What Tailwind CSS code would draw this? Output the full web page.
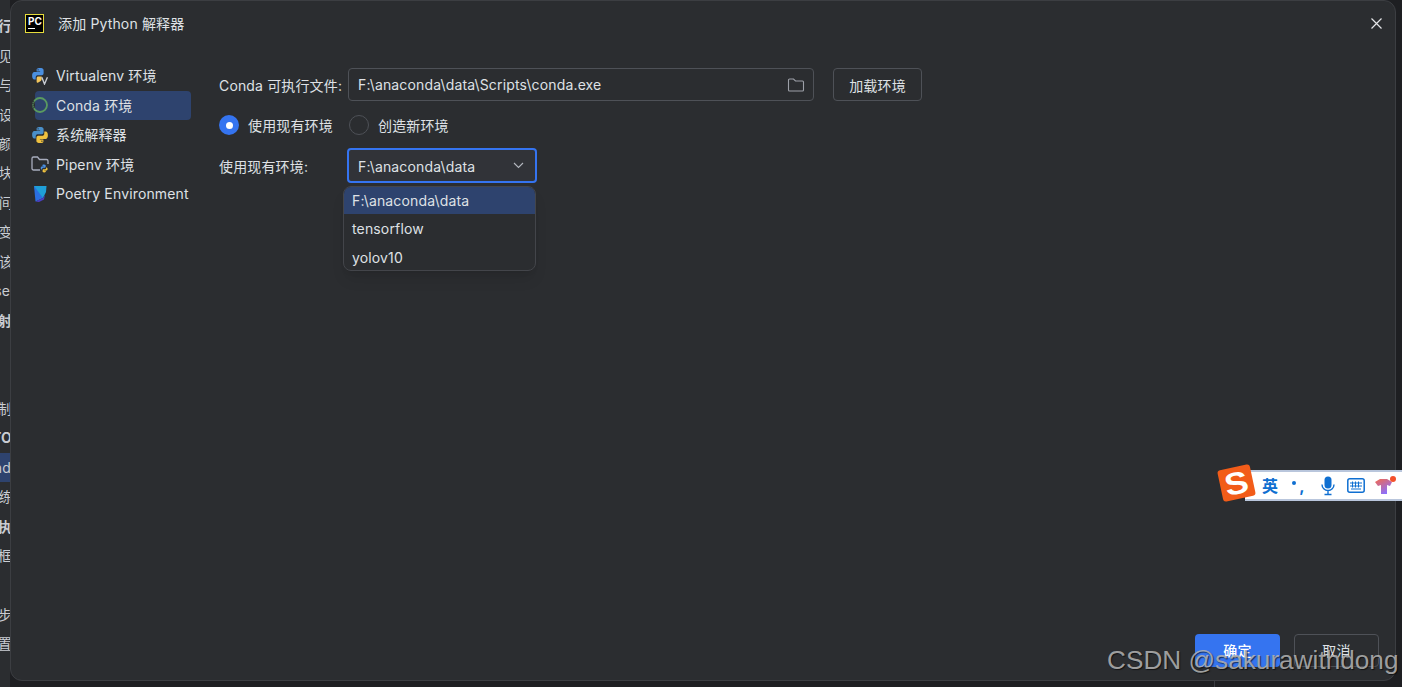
<!DOCTYPE html>
<html lang="en">
  <head>
    <meta charset="UTF-8" />
    <title>添加 Python 解释器</title>
    <script src="https://cdn.jsdelivr.net/npm/@tailwindcss/browser@4"></script>
  </head>
  <body class="relative w-[1402px] h-[687px] overflow-hidden bg-[#1e1f22] text-[#dfe1e5] text-[14px] tracking-[0.15px] font-['Inter','Noto_Sans_CJK_SC',sans-serif]">
    <div class="flex h-[687px] items-start">
      <!-- ide window behind the dialog, only a sliver shows -->
      <div class="w-[10px] h-[687px] shrink-0 overflow-hidden pt-[11px] bg-[#2b2d30] text-[#c9ccd2]">
        <div class="h-[29.45px] flex items-center justify-end whitespace-nowrap font-bold"><span class="-mr-[2px]">行</span></div>
        <div class="h-[29.45px] flex items-center justify-end whitespace-nowrap"><span class="-mr-[3px]">见</span></div>
        <div class="h-[29.45px] flex items-center justify-end whitespace-nowrap"><span class="-mr-[3px]">与</span></div>
        <div class="h-[29.45px] flex items-center justify-end whitespace-nowrap"><span class="-mr-[3px]">设</span></div>
        <div class="h-[29.45px] flex items-center justify-end whitespace-nowrap"><span class="-mr-[3px]">颜</span></div>
        <div class="h-[29.45px] flex items-center justify-end whitespace-nowrap"><span class="-mr-[3px]">块</span></div>
        <div class="h-[29.45px] flex items-center justify-end whitespace-nowrap"><span class="-mr-[3px]">间</span></div>
        <div class="h-[29.45px] flex items-center justify-end whitespace-nowrap"><span class="-mr-[3px]">变</span></div>
        <div class="h-[29.45px] flex items-center justify-end whitespace-nowrap"><span class="-mr-[3px]">该</span></div>
        <div class="h-[29.45px] flex items-center justify-end whitespace-nowrap"><span>se</span></div>
        <div class="h-[29.45px] flex items-center justify-end whitespace-nowrap font-bold"><span class="-mr-[2px]">射</span></div>
        <div class="h-[29.45px]"></div>
        <div class="h-[29.45px]"></div>
        <div class="h-[29.45px] flex items-center justify-end whitespace-nowrap"><span class="-mr-[2px]">制</span></div>
        <div class="h-[29.45px] flex items-center justify-end whitespace-nowrap font-bold"><span class="-mr-[2px]">TO</span></div>
        <div class="h-[29.45px] flex items-center justify-end whitespace-nowrap bg-[#2e436e]"><span class="-mr-[1px]">nd</span></div>
        <div class="h-[29.45px] flex items-center justify-end whitespace-nowrap"><span class="-mr-[3px]">练</span></div>
        <div class="h-[29.45px] flex items-center justify-end whitespace-nowrap font-bold"><span class="-mr-[2px]">执</span></div>
        <div class="h-[29.45px] flex items-center justify-end whitespace-nowrap"><span class="-mr-[2px]">框</span></div>
        <div class="h-[29.45px]"></div>
        <div class="h-[29.45px] flex items-center justify-end whitespace-nowrap"><span class="-mr-[2px]">步</span></div>
        <div class="h-[29.45px] flex items-center justify-end whitespace-nowrap"><span class="-mr-[2px]">置</span></div>
      </div>

      <!-- dialog -->
      <div class="w-[1386px] h-[681px] shrink-0 flex flex-col bg-[#2b2d30] border border-[#3c3e42] rounded-[12px]">
        <div class="h-[45px] shrink-0 flex items-center pl-[14px] pr-[12px]">
          <div class="w-[19px] h-[19px] bg-black border border-[#e6dc3c] flex flex-col pl-[2px] pt-[1px] text-white">
            <span class="text-[10px] leading-[10px] font-bold tracking-normal">PC</span>
            <span class="w-[7px] h-[1px] bg-white mt-[2px]"></span>
          </div>
          <span class="ml-[14px] -mt-[1px]">添加 Python 解释器</span>
          <svg class="ml-auto" width="13" height="13" viewBox="0 0 13 13" fill="none" stroke="#e4e5e7" stroke-width="1.2"><path d="M1.5 1.5l10 10M11.5 1.5l-10 10" /></svg>
        </div>

        <div class="flex-1 flex min-h-0">
          <!-- left list -->
          <div class="w-[196px] shrink-0 pt-[15px] pl-[20px]">
            <div class="h-[29.5px] flex items-center">
              <svg class="shrink-0" width="18" height="18" viewBox="0 0 16 16">
                <path fill="#4a8fe0" d="M8 .8C5 .8 5 2.1 5 2.1V4h3.1v.5H3.2S1 4.3 1 7.8c0 3.4 2 3.3 2 3.3h1.2V9.4s-.1-2 2-2h3.1s1.9 0 1.9-1.8V2.8S11.5.8 8 .8zM6.3 1.9a.6.6 0 110 1.2.6.6 0 010-1.2z" />
                <path fill="#f2c55c" d="M6.5 8.5h3v2.2c0 1.1-.7 1.6-1.5 2.2L6 14c-.6 0-1-.6-1-1.2V10c0-.9.6-1.500 1.500-1.500z" />
                <path fill="none" stroke="#c9ccd2" stroke-width="1.2" d="M9.600 9.200l2.400 6 2.600-6" />
              </svg>
              <span class="ml-[7px]">Virtualenv 环境</span>
            </div>
            <div class="h-[29.5px] flex items-center relative">
              <div class="absolute left-[4px] top-0 w-[156px] h-[29px] rounded-[4px] bg-[#2e436e]"></div>
              <svg class="relative shrink-0" width="18" height="18" viewBox="0 0 18 18" fill="none">
                <circle cx="9" cy="9" r="7" stroke="#5a9a60" stroke-width="1.800" />
                <path d="M3 5.500A7 7 0 003 12.500" stroke="#2b2d30" stroke-width="1.900" stroke-dasharray="1 1" />
              </svg>
              <span class="relative ml-[7px]">Conda 环境</span>
            </div>
            <div class="h-[29.5px] flex items-center">
              <svg class="shrink-0" width="18" height="18" viewBox="0 0 16 16">
                <path fill="#4a8fc9" d="M8 .8C5 .8 5 2.100 5 2.100V4h3.100v.5H3.200S1 4.300 1 7.800c0 3.400 2 3.300 2 3.300h1.200V9.400s-.1-2 2-2h3.100s1.900 0 1.900-1.800V2.800S11.500.8 8 .8zM6.300 1.900a.6.6 0 110 1.200.6.6 0 010-1.200z" />
                <path fill="#efc13f" d="M8 15.200c3 0 3-1.300 3-1.300V12H7.900v-.5h4.900s2.200.2 2.200-3.300c0-3.400-2-3.300-2-3.300h-1.200v1.700s.1 2-2 2H6.700s-1.900 0-1.900 1.800v2.800s-.3 2 3.200 2zM9.700 14.100a.6.6 0 110-1.200.6.6 0 010 1.200z" />
              </svg>
              <span class="ml-[7px]">系统解释器</span>
            </div>
            <div class="h-[29.5px] flex items-center">
              <svg class="shrink-0" width="18" height="18" viewBox="0 0 18 18" fill="none">
                <path d="M9 15H2.500A1.500 1.500 0 011 13.500V3.500A1.500 1.500 0 012.500 2h4l2 2.500h7A1.500 1.500 0 0117 6v3" stroke="#a8adbd" stroke-width="1.300" />
                <path fill="#4a8fe0" d="M13 9.500c-1.500 0-1.500.7-1.500.7v1h1.600v.3h-2.400s-1 0-1 1.500 .9 1.500 .9 1.500h.6v-.8s0-1 1-1h1.500s1 0 1-.9v-1.400s0-.9-1.700-.9z" />
                <path fill="#efc13f" d="M13.300 17.500c1.500 0 1.500-.7 1.500-.7v-1h-1.600v-.3h2.400s1 0 1-1.500-.9-1.500-.9-1.500h-.6v.8s0 1-1 1h-1.500s-1 0-1 .9v1.400s0 .9 1.700.9z" />
              </svg>
              <span class="ml-[7px]">Pipenv 环境</span>
            </div>
            <div class="h-[29.5px] flex items-center">
              <svg class="shrink-0" width="18" height="18" viewBox="0 0 18 18">
                <path fill="#1f9fd8" d="M3 1h12.500L15 7l-3 6H6z" />
                <path fill="#2a6fe0" d="M3 1l9 12-7.500 3.500z" />
                <path fill="#4b3fc4" d="M4.500 16.500L12 13l2-3-1 4.500-5 2.500z" />
              </svg>
              <span class="ml-[7px]">Poetry Environment</span>
            </div>
          </div>

          <!-- form -->
          <div class="flex-1 pt-[22px] pl-[12px]">
            <div class="flex items-center h-[33px]">
              <span class="w-[129px] shrink-0 pt-[1px]">Conda 可执行文件:</span>
              <div class="w-[466px] h-[33px] flex items-center justify-between pl-[9px] pr-[8px] border border-[#4e5157] rounded-[4px]">
                <span class="-mt-[1px]">F:\anaconda\data\Scripts\conda.exe</span>
                <svg width="18" height="16" viewBox="0 0 18 16" fill="none" stroke="#9da0a8" stroke-width="1.100"><path d="M1.500 13V3a1 1 0 011-1h4l2 2h7a1 1 0 011 1v8a1 1 0 01-1 1h-13a1 1 0 01-1-1z" /></svg>
              </div>
              <div class="ml-[19px] w-[89px] h-[33px] flex items-center justify-center border border-[#4e5157] rounded-[4px] pt-[1px]">加载环境</div>
            </div>

            <div class="flex items-center h-[20px] mt-[14px]">
              <span class="w-[20px] h-[20px] rounded-full bg-[#3574f0] flex items-center justify-center"><span class="w-[7px] h-[7px] rounded-full bg-white"></span></span>
              <span class="ml-[9px] w-[101px]">使用现有环境</span>
              <span class="w-[20px] h-[20px] rounded-full border border-[#4e5157]"></span>
              <span class="ml-[9px]">创造新环境</span>
            </div>

            <div class="flex items-center h-[35px] mt-[13px] relative">
              <span class="w-[128px] shrink-0 pt-[1px]">使用现有环境:</span>
              <div class="w-[190px] h-[35px] flex items-center justify-between pl-[9px] pr-[11px] border-2 border-[#3574f0] rounded-[4px] bg-[#313338]">
                <span class="pt-[1px]">F:\anaconda\data</span>
                <svg width="11" height="7" viewBox="0 0 11 7" fill="none" stroke="#b4b8bf" stroke-width="1.100"><path d="M1 1l4.500 4.500L10 1" /></svg>
              </div>
              <!-- popup -->
              <div class="absolute left-[124px] top-[38px] w-[193px] h-[85px] rounded-[8px] border border-[#43454a] bg-[#2b2d30] overflow-hidden shadow-lg">
                <div class="h-[27px] flex items-center pl-[8px] bg-[#2e436e]">F:\anaconda\data</div>
                <div class="h-[29px] flex items-center pl-[8px]">tensorflow</div>
                <div class="h-[28px] flex items-center pl-[8px] pt-[1px]">yolov10</div>
              </div>
            </div>
          </div>
        </div>

        <div class="h-[46px] shrink-0 flex items-start justify-end pr-[16px]">
          <div class="w-[85px] h-[33px] flex items-center justify-center rounded-[4px] bg-[#3574f0] text-white font-medium">确定</div>
          <div class="ml-[14px] w-[85px] h-[33px] flex items-center justify-center rounded-[4px] border border-[#4e5157]">取消</div>
        </div>
      </div>
    </div>

    <!-- bottom edge of the ide, under the dialog -->
    <div class="absolute left-[1214px] top-[681px] w-[1px] h-[6px] bg-[#393b40]"></div>

    <!-- sogou ime bar -->
    <div class="absolute left-[1245px] top-[470px] w-[157px] h-[31px] flex items-center bg-white border-y-2 border-[#b9c6dc] text-[#0f6fd1]">
      <span class="ml-[17px] text-[16px] font-bold">英</span>
      <span class="ml-[14px] w-[4px] h-[4px] rounded-full bg-[#0f6fd1] mb-[6px]"></span>
      <span class="ml-[3px] text-[16px] font-bold leading-none">,</span>
      <svg class="ml-[16px]" width="14" height="20" viewBox="0 0 14 20" fill="none"><rect x="3.500" y="0.500" width="7" height="12" rx="3.500" fill="#0f6fd1" /><path d="M1 8.500a6 6 0 0012 0M7 14.500V18M3.500 18.500h7" stroke="#0f6fd1" stroke-width="1.400" /></svg>
      <svg class="ml-[12px]" width="18" height="15" viewBox="0 0 18 15" fill="none" stroke="#0f6fd1"><rect x="0.800" y="0.800" width="16.400" height="13.400" rx="2" stroke-width="1.500" /><path d="M3 5h12M3 8h12M4 11h10M5.500 3.500v6M8.500 3.500v6M11.500 3.500v6" stroke-width="1" /></svg>
      <svg class="ml-[9px]" width="22" height="20" viewBox="0 0 22 20"><defs><linearGradient id="shirt" x1="0" y1="0" x2="0.600" y2="1"><stop offset="0" stop-color="#f5694a" /><stop offset="1" stop-color="#8a70ff" /></linearGradient></defs><path fill="url(#shirt)" d="M1 6l5-3h7l5 3-2 4-3-1v9H7V9l-3 1z" /><circle cx="19" cy="3" r="3" fill="#f4512c" /></svg>
    </div>
    <div class="absolute left-[1220px] top-[467px] w-[33px] h-[32px] rounded-[3px] -rotate-[12deg] bg-[#f25c19] flex items-center justify-center text-white text-[31px] leading-none font-bold font-['Liberation_Sans',sans-serif] tracking-normal"><span class="scale-x-[1.15]">S</span></div>

    <!-- watermark -->
    <div class="absolute left-[1107px] top-[644px] text-[26.2px] leading-[32px] tracking-normal whitespace-nowrap text-[#b6b6b6]/85 font-['Liberation_Sans',sans-serif] [text-shadow:1px_1px_1px_rgba(0,0,0,0.6)]">CSDN @sakurawithdong</div>
  </body>
</html>
